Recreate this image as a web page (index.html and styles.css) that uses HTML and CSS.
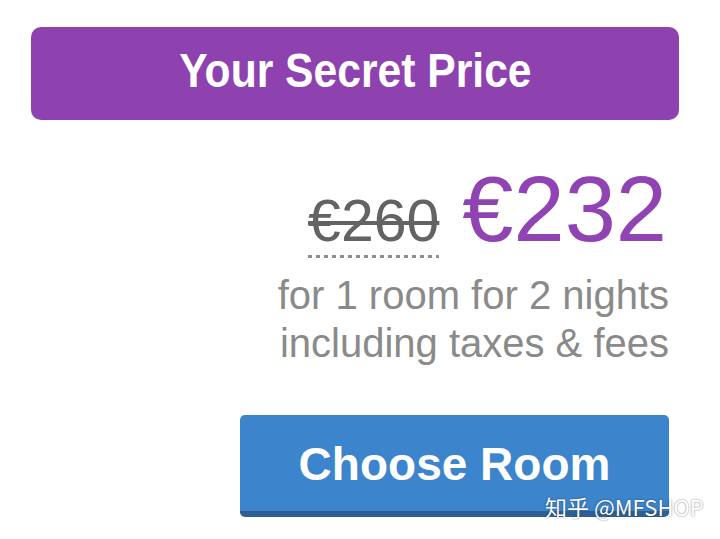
FILE: index.html
```html
<!DOCTYPE html>
<html lang="en">
<head>
<meta charset="utf-8">
<title>Your Secret Price</title>
<link rel="stylesheet" href="styles.css">
</head>
<body>
<div class="card">
  <div class="banner"><span class="banner-text">Your Secret Price</span></div>
  <div class="offer">
    <div class="price-row">
      <span class="old-price">€260</span>
      <span class="new-price">€232</span>
    </div>
    <div class="details">
      <div class="line">for 1 room for 2 nights</div>
      <div class="line">including taxes &amp; fees</div>
    </div>
    <button class="choose">Choose Room</button>
  </div>
  <div class="watermark">知乎 @MFSHOP</div>
</div>
</body>
</html>
```

FILE: styles.css
```css
html, body {
  margin: 0;
  padding: 0;
  background: #ffffff;
}

.card {
  position: relative;
  box-sizing: border-box;
  width: 720px;
  height: 539px;
  padding-top: 27px;
  overflow: hidden;
  font-family: "Liberation Sans", Arial, sans-serif;
}

.banner {
  margin: 0 41px 0 31px;
  height: 93px;
  background: #8e42b0;
  border-radius: 10px;
  display: flex;
  align-items: center;
  justify-content: center;
}

.banner-text {
  display: inline-block;
  color: #ffffff;
  font-weight: bold;
  font-size: 49px;
  line-height: 1;
  margin-bottom: 7px;
  transform: scaleX(0.87);
}

.offer {
  display: flex;
  flex-direction: column;
  align-items: flex-end;
  padding-right: 51px;
}

.price-row {
  display: flex;
  align-items: baseline;
  margin-top: 43px;
  margin-right: 2px;
}

.old-price {
  display: inline-block;
  font-size: 59px;
  line-height: 1;
  color: #636363;
  text-decoration: line-through;
  text-decoration-thickness: 4px;
  padding-bottom: 7px;
  background-image: linear-gradient(to right, #8c8c8c 0 4px, transparent 4px 8px);
  background-size: 8px 3px;
  background-repeat: repeat-x;
  background-position: left bottom;
}

.new-price {
  font-size: 92px;
  line-height: 1;
  color: #9044b4;
  margin-left: 23px;
}

.details {
  margin-top: 13px;
  text-align: right;
  color: #8a8a8a;
  font-size: 40px;
  line-height: 48px;
}

.choose {
  margin-top: 48px;
  width: 429px;
  height: 102px;
  padding: 0;
  border: 0;
  border-bottom: 6px solid #2d5f96;
  border-radius: 5px;
  background: #3c84cc;
  color: #ffffff;
  font-family: "Liberation Sans", Arial, sans-serif;
  font-weight: bold;
  font-size: 46px;
  line-height: 98px;
}

.watermark {
  position: absolute;
  left: 545px;
  top: 491px;
  font-family: "Noto Sans CJK SC", "Noto Sans", sans-serif;
  font-size: 22px;
  line-height: 30px;
  color: #ffffff;
  text-shadow: 0 0 2px rgba(0, 0, 0, 0.55);
  white-space: nowrap;
}
```
